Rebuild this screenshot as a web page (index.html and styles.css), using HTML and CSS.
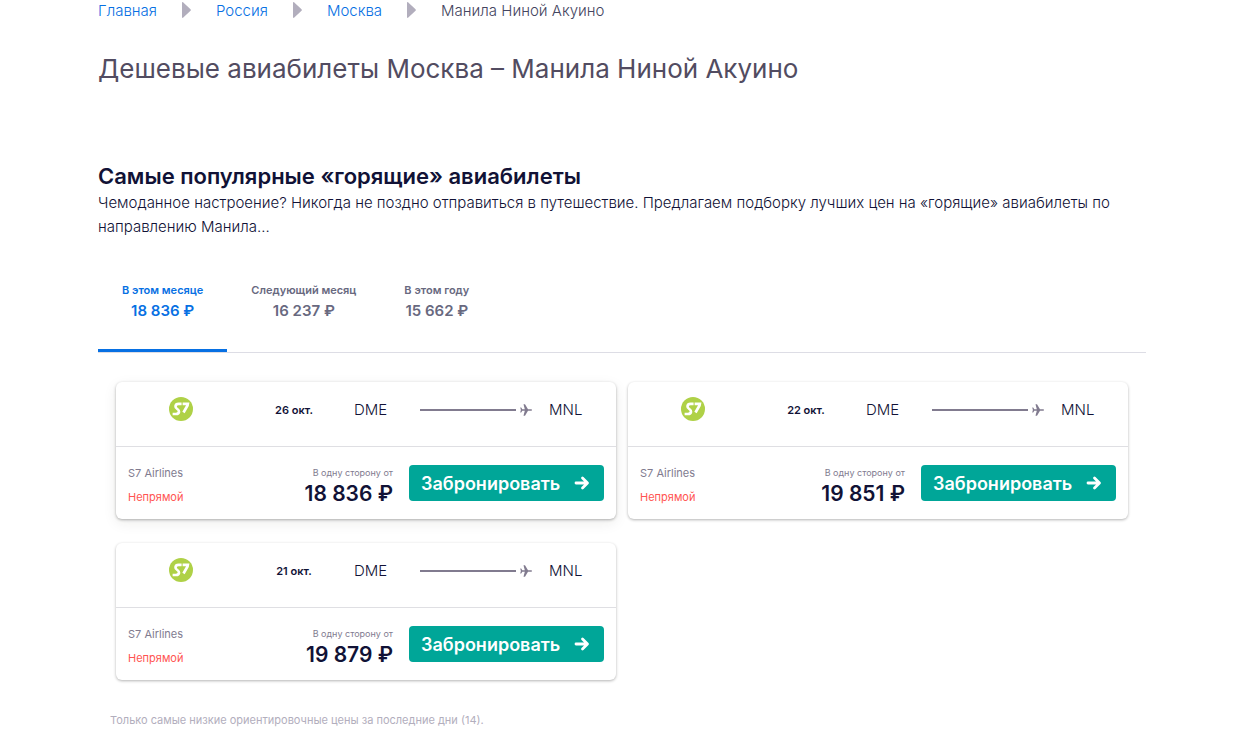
FILE: index.html
```html
<!DOCTYPE html>
<html lang="ru">
<head>
    <meta charset="utf-8">
    <meta name="viewport" content="width=device-width, initial-scale=1">
    <title>Дешевые авиабилеты Москва – Манила Ниной Акуино</title>
    <link rel="stylesheet" href="styles.css">
</head>
<body>
    <svg class="sprite" aria-hidden="true">
        <symbol id="icon-s7" viewBox="0 0 24 24">
            <circle cx="12" cy="12" r="12" fill="#afd147"/>
            <path d="M12.600 6.900H9.600C7.800 6.900 6.700 7.800 6.500 9.200c-.2 1.400.6 2 1.800 2.800 1.200.8 1.900 1.500 1.700 2.700-.2 1.500-1.300 2.300-3 2.300H3.600M13.600 6.900h5.200l-.3 1.500-4 7.100" fill="none" stroke="#fff" stroke-width="2.700"/>
        </symbol>
        <symbol id="icon-plane" viewBox="0 0 12 12">
            <path d="M11.300 5.300H8L5 .3H3.500l1.300 5H2.300L1.200 3.500H.2L.9 6l-.7 2.500h1l1.100-1.800h2.500l-1.300 5H5l3-5h3.300c.4 0 .7-.3.7-.7s-.3-.7-.7-.7z" fill="#817b8f"/>
        </symbol>
        <symbol id="icon-arrow" viewBox="0 0 16 14">
            <path d="M2 7h11M8.500 2l5 5-5 5" fill="none" stroke="#fff" stroke-width="2.800" stroke-linecap="round" stroke-linejoin="round"/>
        </symbol>
        <symbol id="icon-crumb" viewBox="0 0 9 16">
            <path d="M0 1c0-.9.700-1.200 1.300-.6l7.200 6.800c.5.500.5 1.100 0 1.600l-7.200 6.800c-.6.600-1.300.3-1.300-.6z" fill="#b2aebd"/>
        </symbol>
    </svg>

    <div class="page">
        <nav class="breadcrumbs" aria-label="Навигация">
            <a href="#">Главная</a>
            <svg class="crumb-arrow"><use href="#icon-crumb"/></svg>
            <a href="#">Россия</a>
            <svg class="crumb-arrow"><use href="#icon-crumb"/></svg>
            <a href="#">Москва</a>
            <svg class="crumb-arrow"><use href="#icon-crumb"/></svg>
            <span>Манила Ниной Акуино</span>
        </nav>

        <h1 class="page-title">Дешевые авиабилеты Москва – Манила Ниной Акуино</h1>

        <section class="deals">
            <h2 class="deals-title">Самые популярные «горящие» авиабилеты</h2>
            <p class="deals-intro">Чемоданное настроение? Никогда не поздно отправиться в путешествие. Предлагаем подборку лучших цен на «горящие» авиабилеты по направлению Манила...</p>

            <div class="tabs" role="tablist">
                <button class="tab tab-active" role="tab" aria-selected="true">
                    <span class="tab-label">В этом месяце</span>
                    <span class="tab-price">18 836 ₽</span>
                </button>
                <button class="tab" role="tab" aria-selected="false">
                    <span class="tab-label">Следующий месяц</span>
                    <span class="tab-price">16 237 ₽</span>
                </button>
                <button class="tab" role="tab" aria-selected="false">
                    <span class="tab-label">В этом году</span>
                    <span class="tab-price">15 662 ₽</span>
                </button>
            </div>

            <div class="cards">
                <article class="card card-raised">
                    <div class="card-route">
                        <svg class="logo" role="img" aria-label="S7 Airlines"><use href="#icon-s7"/></svg>
                        <span class="date">26 окт.</span>
                        <span class="airport">DME</span>
                        <span class="flight-line"><svg class="plane"><use href="#icon-plane"/></svg></span>
                        <span class="airport">MNL</span>
                    </div>
                    <div class="card-offer">
                        <div class="airline">
                            <span>S7 Airlines</span>
                            <span class="indirect">Непрямой</span>
                        </div>
                        <div class="price">
                            <span class="price-label">В одну сторону от</span>
                            <span class="price-value">18 836 ₽</span>
                        </div>
                        <button class="book">Забронировать<svg class="book-arrow"><use href="#icon-arrow"/></svg></button>
                    </div>
                </article>

                <article class="card">
                    <div class="card-route">
                        <svg class="logo" role="img" aria-label="S7 Airlines"><use href="#icon-s7"/></svg>
                        <span class="date">22 окт.</span>
                        <span class="airport">DME</span>
                        <span class="flight-line"><svg class="plane"><use href="#icon-plane"/></svg></span>
                        <span class="airport">MNL</span>
                    </div>
                    <div class="card-offer">
                        <div class="airline">
                            <span>S7 Airlines</span>
                            <span class="indirect">Непрямой</span>
                        </div>
                        <div class="price">
                            <span class="price-label">В одну сторону от</span>
                            <span class="price-value">19 851 ₽</span>
                        </div>
                        <button class="book">Забронировать<svg class="book-arrow"><use href="#icon-arrow"/></svg></button>
                    </div>
                </article>

                <article class="card">
                    <div class="card-route">
                        <svg class="logo" role="img" aria-label="S7 Airlines"><use href="#icon-s7"/></svg>
                        <span class="date">21 окт.</span>
                        <span class="airport">DME</span>
                        <span class="flight-line"><svg class="plane"><use href="#icon-plane"/></svg></span>
                        <span class="airport">MNL</span>
                    </div>
                    <div class="card-offer">
                        <div class="airline">
                            <span>S7 Airlines</span>
                            <span class="indirect">Непрямой</span>
                        </div>
                        <div class="price">
                            <span class="price-label">В одну сторону от</span>
                            <span class="price-value">19 879 ₽</span>
                        </div>
                        <button class="book">Забронировать<svg class="book-arrow"><use href="#icon-arrow"/></svg></button>
                    </div>
                </article>
            </div>

            <p class="note">Только самые низкие ориентировочные цены за последние дни (14).</p>
        </section>
    </div>
</body>
</html>
```

FILE: styles.css
```css
* {
    box-sizing: border-box;
}
body {
    margin: 0;
    background: #fff;
    color: #111236;
    font-family: Inter, "Liberation Sans", sans-serif;
    font-size: 15px;
    font-weight: 300;
    line-height: 24px;
}
h1, h2, p {
    margin: 0;
}
button {
    font-family: inherit;
    border: none;
    cursor: pointer;
}
.sprite {
    display: none;
}
.page {
    padding: 0 89px 16px 98px;
}

.breadcrumbs {
    display: flex;
    align-items: center;
    gap: 25px;
    color: #444560;
    line-height: 22px;
}
.breadcrumbs a {
    color: #0770e3;
    text-decoration: none;
}
.crumb-arrow {
    width: 9px;
    height: 16px;
    margin-bottom: 2px;
}
.page-title {
    margin-top: 31px;
    color: #524c61;
    font-size: 26px;
    font-weight: 400;
    line-height: 32px;
}

.deals {
    margin-top: 76px;
}
.deals-title {
    font-size: 22px;
    font-weight: 600;
    line-height: 30px;
}
.tabs {
    display: flex;
    margin-top: 38px;
    border-bottom: 1px solid #dddde5;
}
.tab {
    display: flex;
    flex-direction: column;
    align-items: center;
    height: 75px;
    padding: 3px 24px 0;
    background: none;
    color: #68697f;
    font-weight: 600;
}
.tab-active {
    color: #0770e3;
    border-bottom: 3px solid #0770e3;
}
.tab-label {
    font-size: 11px;
    line-height: 20px;
}
.tab-price {
    font-size: 15px;
    line-height: 22px;
}

.cards {
    display: grid;
    grid-template-columns: 1fr 1fr;
    gap: 24px 12px;
    padding: 29px 18px 0;
}
.card {
    border-radius: 6px;
    box-shadow: 0 1px 3px rgba(0, 0, 0, 0.3);
}
.card-raised {
    box-shadow: 0 1px 3px rgba(0, 0, 0, 0.3), 0 4px 14px rgba(37, 32, 31, 0.08);
}
.card-route {
    display: grid;
    grid-template-columns: 130px 96px 54px 1fr 55px;
    align-items: center;
    padding: 12px 24px 20px 0;
    border-bottom: 1px solid #dfdfe3;
    line-height: 32px;
}
.logo {
    justify-self: center;
    width: 24px;
    height: 24px;
    margin-bottom: 2px;
}
.date {
    font-size: 11px;
    font-weight: 600;
    text-align: center;
}
.airport {
    padding-left: 12px;
}
.flight-line {
    display: flex;
    align-items: center;
    gap: 4px;
    padding: 0 5px 0 24px;
}
.flight-line::before {
    content: "";
    flex: 1;
    height: 2px;
    background: #817b8f;
}
.plane {
    width: 12px;
    height: 12px;
}
.card-offer {
    display: flex;
    align-items: center;
    padding: 12px 12px 10px;
}
.airline {
    display: flex;
    flex: 1;
    flex-direction: column;
    padding-top: 2px;
    color: #817b8f;
    font-size: 11px;
    font-weight: 400;
}
.indirect {
    color: #ff5452;
}
.price {
    display: flex;
    flex-direction: column;
    align-items: flex-end;
    margin-right: 16px;
    padding-top: 2px;
}
.price-label {
    color: #817b8f;
    font-size: 9px;
    font-weight: 400;
    line-height: 18px;
}
.price-value {
    font-size: 21px;
    font-weight: 600;
    line-height: 24px;
}
.book {
    display: flex;
    align-items: center;
    justify-content: space-between;
    width: 195px;
    height: 36px;
    margin-bottom: 2px;
    padding: 0 14px 0 12px;
    border-radius: 4px;
    background: #00a698;
    color: #fff;
    font-size: 18px;
    font-weight: 600;
}
.book-arrow {
    width: 16px;
    height: 14px;
}
.note {
    padding: 28px 12px 0;
    color: #b2aebd;
    font-size: 11px;
    font-weight: 400;
}
```
